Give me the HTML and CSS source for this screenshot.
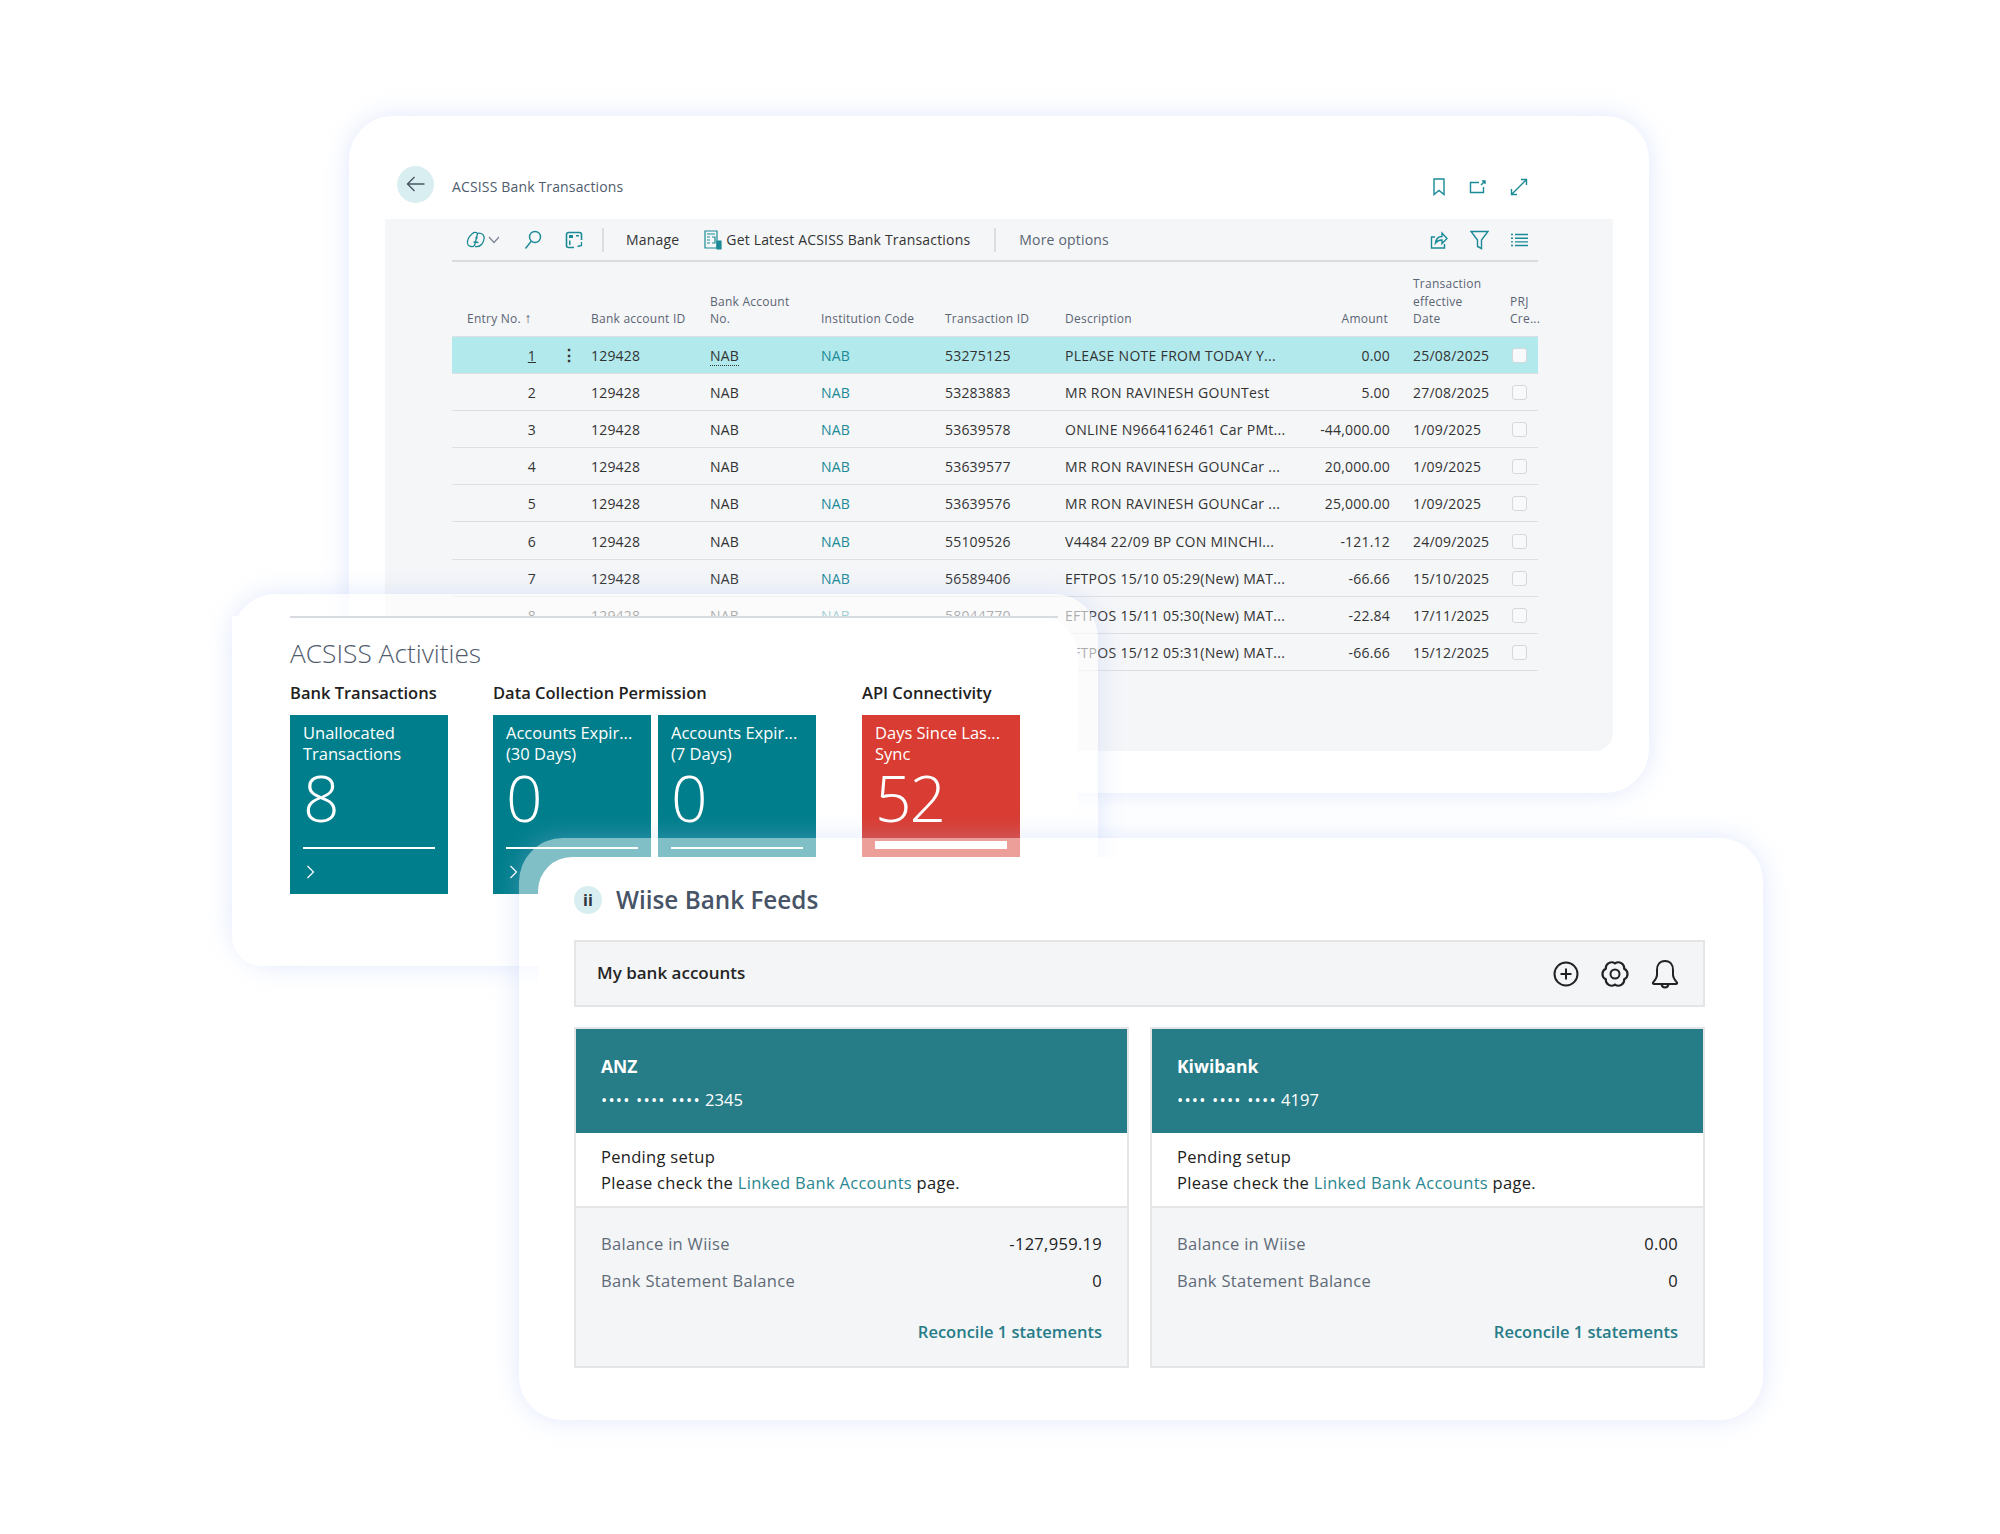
FILE: index.html

```html
<!DOCTYPE html>
<html lang="en">
<head>
  <meta charset="UTF-8">
  <title>Wiise Bank Feeds</title>
  <link rel="stylesheet" href="styles.css">
</head>
<body>
<div class="canvas">

  <!-- back window: bank transactions list -->
  <section class="window transactions">
    <div class="page-head">
      <span class="back-btn">
        <svg width="20" height="18" viewBox="0 0 20 18" fill="none" stroke="#4a5563" stroke-width="1.4"><path d="M18.5 9H1.5M8.5 2 1.5 9l7 7"/></svg>
      </span>
      <span class="page-title">ACSISS Bank Transactions</span>
      <span class="head-icons">
        <svg width="14" height="18" viewBox="0 0 14 18" fill="none" stroke="#1a8a96" stroke-width="1.4"><path d="M2 1h10v15.5l-5-4-5 4z"/></svg>
        <svg width="18" height="14" viewBox="0 0 18 14" fill="none" stroke="#1a8a96" stroke-width="1.4"><path d="M10 2.5H1.5v10h13V7M12 5l4-4M13 1h3v3"/></svg>
        <svg width="18" height="18" viewBox="0 0 18 18" fill="none" stroke="#1a8a96" stroke-width="1.4"><path d="M1.5 16.5l15-15M11 1.500h5.500V7M1.500 11v5.500H7"/></svg>
      </span>
    </div>

    <div class="panel">
      <div class="toolbar">
        <svg class="tool-icon" width="20" height="18" viewBox="0 0 20 18" fill="none" stroke="#1a8a96" stroke-width="1.3"><path d="M6.500 2.500c1.500-1.500 4-1.500 5 0L9 13c-.5 2-2 3-4 2.500-2.500-.5-4-2.500-3.500-5C2 7 4 4.500 6.500 2.500z"/><path d="M11.500 2.500c2-1 5.500 0 6.500 3 .5 2-.5 5-2 7.500-1.500 2-4 3-7 2.500M9.500 6.500l2 .5M7.500 11l5 .5"/></svg>
        <svg class="chevron" width="12" height="8" viewBox="0 0 12 8" fill="none" stroke="#7b8592" stroke-width="1.2"><path d="M1 1l5 5.500L11 1"/></svg>
        <svg class="tool-icon search" width="18" height="20" viewBox="0 0 18 20" fill="none" stroke="#1a8a96" stroke-width="1.4"><circle cx="11" cy="7" r="5.500"/><path d="M7 11.500 1.500 18.500"/></svg>
        <svg class="tool-icon layout" width="18" height="18" viewBox="0 0 18 18" fill="none" stroke="#1a8a96" stroke-width="1.6"><path d="M9 16.500H3.500a2 2 0 0 1-2-2v-11a2 2 0 0 1 2-2h11a2 2 0 0 1 2 2V9"/><path d="M4 4h4v3H4zM11 4h3v1.500h-3zM4 9.500h1.500V14H4z" fill="#1a8a96" stroke="none"/><path d="M16.500 11v3.500l-4 1" stroke-width="1.300"/></svg>
        <span class="tool-sep first"></span>
        <span class="tool-text manage">Manage</span>
        <svg class="report" width="18" height="20" viewBox="0 0 18 20" fill="none" stroke="#1a8a96" stroke-width="1.200"><path d="M1 1h12v17H1zM3 4h8M3 7h3M3 10h3M3 13h3M8 7h3v6H8"/><path d="M13 11h4v8h-4z" fill="#1a8a96"/></svg>
        <span class="tool-text">Get Latest ACSISS Bank Transactions</span>
        <span class="tool-sep"></span>
        <span class="tool-text muted">More options</span>
        <span class="tool-right">
          <svg width="18" height="18" viewBox="0 0 18 18" fill="none" stroke="#1a8a96" stroke-width="1.4"><path d="M5 6H1.500v11h13v-4M5.500 12c.5-4 3-6.500 6.500-6.500V2l5 5.500-5 5V9c-3 0-5 1-6.500 3z"/></svg>
          <svg width="19" height="20" viewBox="0 0 19 20" fill="none" stroke="#1a8a96" stroke-width="1.400"><path d="M1 1.500h17L11.500 10v8.500l-4-2V10z"/></svg>
          <svg width="17" height="14" viewBox="0 0 17 14" fill="none" stroke="#1a8a96" stroke-width="1.400"><path d="M0 1.500h2M4 1.500h13M0 5.200h2M4 5.200h13M0 8.900h2M4 8.900h13M0 12.500h2M4 12.500h13"/></svg>
        </span>
      </div>

      <table class="grid">
        <colgroup>
          <col class="c-entry"><col class="c-menu"><col class="c-id"><col class="c-no"><col class="c-inst"><col class="c-trans"><col class="c-desc"><col class="c-amt"><col class="c-date"><col class="c-prj">
        </colgroup>
        <thead>
          <tr>
            <th class="th-entry" colspan="2">Entry No. <span class="arrow">↑</span></th>
            <th class="th-id">Bank account ID</th>
            <th>Bank Account<br>No.</th>
            <th>Institution Code</th>
            <th>Transaction ID</th>
            <th>Description</th>
            <th class="num">Amount</th>
            <th>Transaction<br>effective<br>Date</th>
            <th>PRJ<br>Cre...</th>
          </tr>
        </thead>
        <tbody>
          <tr class="active">
            <td class="num entry"><u>1</u></td><td class="dots">⋮</td><td>129428</td><td><span class="dotted">NAB</span></td><td class="link">NAB</td><td>53275125</td><td class="desc">PLEASE NOTE FROM TODAY Y...</td><td class="num amt">0.00</td><td>25/08/2025</td><td><span class="check"></span></td>
          </tr>
          <tr>
            <td class="num entry">2</td><td></td><td>129428</td><td>NAB</td><td class="link">NAB</td><td>53283883</td><td class="desc">MR RON RAVINESH GOUNTest</td><td class="num amt">5.00</td><td>27/08/2025</td><td><span class="check"></span></td>
          </tr>
          <tr>
            <td class="num entry">3</td><td></td><td>129428</td><td>NAB</td><td class="link">NAB</td><td>53639578</td><td class="desc">ONLINE N9664162461 Car PMt...</td><td class="num amt">-44,000.00</td><td>1/09/2025</td><td><span class="check"></span></td>
          </tr>
          <tr>
            <td class="num entry">4</td><td></td><td>129428</td><td>NAB</td><td class="link">NAB</td><td>53639577</td><td class="desc">MR RON RAVINESH GOUNCar ...</td><td class="num amt">20,000.00</td><td>1/09/2025</td><td><span class="check"></span></td>
          </tr>
          <tr>
            <td class="num entry">5</td><td></td><td>129428</td><td>NAB</td><td class="link">NAB</td><td>53639576</td><td class="desc">MR RON RAVINESH GOUNCar ...</td><td class="num amt">25,000.00</td><td>1/09/2025</td><td><span class="check"></span></td>
          </tr>
          <tr>
            <td class="num entry">6</td><td></td><td>129428</td><td>NAB</td><td class="link">NAB</td><td>55109526</td><td class="desc">V4484 22/09 BP CON MINCHI...</td><td class="num amt">-121.12</td><td>24/09/2025</td><td><span class="check"></span></td>
          </tr>
          <tr>
            <td class="num entry">7</td><td></td><td>129428</td><td>NAB</td><td class="link">NAB</td><td>56589406</td><td class="desc">EFTPOS 15/10 05:29(New) MAT...</td><td class="num amt">-66.66</td><td>15/10/2025</td><td><span class="check"></span></td>
          </tr>
          <tr>
            <td class="num entry">8</td><td></td><td>129428</td><td>NAB</td><td class="link">NAB</td><td>58044770</td><td class="desc">EFTPOS 15/11 05:30(New) MAT...</td><td class="num amt">-22.84</td><td>17/11/2025</td><td><span class="check"></span></td>
          </tr>
          <tr>
            <td class="num entry">9</td><td></td><td>129428</td><td>NAB</td><td class="link">NAB</td><td>59044771</td><td class="desc">EFTPOS 15/12 05:31(New) MAT...</td><td class="num amt">-66.66</td><td>15/12/2025</td><td><span class="check"></span></td>
          </tr>
        </tbody>
      </table>
    </div>
  </section>

  <!-- middle window: activity tiles -->
  <section class="window activities">
    <div class="activities-body">
      <h2 class="activities-title">ACSISS Activities</h2>
      <div class="tile-groups">
        <div class="tile-group">
          <h3>Bank Transactions</h3>
          <div class="tiles">
            <div class="tile">
              <div class="tile-label">Unallocated<br>Transactions</div>
              <div class="tile-value">8</div>
              <div class="tile-line"></div>
              <svg class="tile-chevron" width="9" height="14" viewBox="0 0 9 14" fill="none" stroke="#fff" stroke-width="1.200"><path d="M1.500 1l6 6-6 6"/></svg>
            </div>
          </div>
        </div>
        <div class="tile-group">
          <h3>Data Collection Permission</h3>
          <div class="tiles">
            <div class="tile">
              <div class="tile-label">Accounts Expir...<br>(30 Days)</div>
              <div class="tile-value">0</div>
              <div class="tile-line"></div>
              <svg class="tile-chevron" width="9" height="14" viewBox="0 0 9 14" fill="none" stroke="#fff" stroke-width="1.200"><path d="M1.500 1l6 6-6 6"/></svg>
            </div>
            <div class="tile">
              <div class="tile-label">Accounts Expir...<br>(7 Days)</div>
              <div class="tile-value">0</div>
              <div class="tile-line"></div>
            </div>
          </div>
        </div>
        <div class="tile-group">
          <h3>API Connectivity</h3>
          <div class="tiles">
            <div class="tile red">
              <div class="tile-label">Days Since Las...<br>Sync</div>
              <div class="tile-value">52</div>
              <div class="tile-line"></div>
            </div>
          </div>
        </div>
      </div>
    </div>
  </section>

  <!-- front window: bank feeds -->
  <section class="window feeds">
    <div class="feeds-body">
      <div class="feeds-head">
        <span class="feeds-logo">ii</span>
        <h1>Wiise Bank Feeds</h1>
      </div>
      <div class="accounts-bar">
        <span class="bar-title">My bank accounts</span>
        <span class="bar-icons">
          <svg width="26" height="26" viewBox="0 0 26 26" fill="none" stroke="#222" stroke-width="2"><circle cx="13" cy="13" r="11.500"/><path d="M13 7.500v11M7.500 13h11"/></svg>
          <svg width="28" height="26" viewBox="0 0 28 26" fill="none" stroke="#222" stroke-width="2"><circle cx="14" cy="13" r="4.500"/><path d="M14 3.200A5.400 5.400 0 0 1 22.490 8.100 5.400 5.400 0 0 1 22.490 17.900 5.400 5.400 0 0 1 14 22.800 5.400 5.400 0 0 1 5.510 17.900 5.400 5.400 0 0 1 5.510 8.100 5.400 5.400 0 0 1 14 3.200z" transform="translate(14 13) scale(1.080) translate(-14 -13)"/></svg>
          <svg width="28" height="30" viewBox="0 0 28 30" fill="none" stroke="#222" stroke-width="2" stroke-linejoin="round"><path d="M14 2C8.500 2 6 6 6 11v5c0 3-2 5-4 7.500-.4.700 0 1.500 1 1.500h22c1 0 1.400-.8 1-1.500-2-2.500-4-4.500-4-7.500v-5c0-5-2.500-9-8-9z"/><path d="M10.500 25c.3 2 1.600 3.500 3.500 3.500s3.200-1.500 3.500-3.500"/></svg>
        </span>
      </div>
      <div class="bank-cards">
        <div class="bank-card">
          <div class="bank-head">
            <div class="bank-name">ANZ</div>
            <div class="bank-number"><span class="mask">•••• •••• ••••</span> 2345</div>
          </div>
          <div class="bank-note">
            Pending setup<br>
            Please check the <a href="#">Linked Bank Accounts</a> page.
          </div>
          <div class="bank-foot">
            <div class="bal-row"><span>Balance in Wiise</span><b>-127,959.19</b></div>
            <div class="bal-row"><span>Bank Statement Balance</span><b>0</b></div>
            <a class="reconcile" href="#">Reconcile 1 statements</a>
          </div>
        </div>
        <div class="bank-card">
          <div class="bank-head">
            <div class="bank-name">Kiwibank</div>
            <div class="bank-number"><span class="mask">•••• •••• ••••</span> 4197</div>
          </div>
          <div class="bank-note">
            Pending setup<br>
            Please check the <a href="#">Linked Bank Accounts</a> page.
          </div>
          <div class="bank-foot">
            <div class="bal-row"><span>Balance in Wiise</span><b>0.00</b></div>
            <div class="bal-row"><span>Bank Statement Balance</span><b>0</b></div>
            <a class="reconcile" href="#">Reconcile 1 statements</a>
          </div>
        </div>
      </div>
    </div>
  </section>

</div>
</body>
</html>
```

FILE: styles.css

```css
* { box-sizing: border-box; }

body {
  margin: 0;
  background: #fff;
  font-family: "Open Sans", "Noto Sans", sans-serif;
  color: #333;
}
h1, h2, h3 { margin: 0; font-weight: 400; }
a { text-decoration: none; }

.canvas {
  position: relative;
  width: 2000px;
  height: 1534px;
  overflow: hidden;
}

.window {
  position: absolute;
  border-radius: 44px;
  box-shadow: 0 0 26px rgba(170, 190, 245, 0.35);
}

/* back window */
.transactions {
  left: 349px;
  top: 116px;
  width: 1300px;
  height: 677px;
  padding: 0 36px;
  background: #fff;
}
.page-head {
  display: flex;
  align-items: center;
  height: 103px;
  padding: 33px 0 0 12px;
}
.back-btn {
  display: flex;
  align-items: center;
  justify-content: center;
  width: 37px;
  height: 37px;
  border-radius: 50%;
  background: #d9eef0;
}
.page-title {
  margin-left: 18px;
  padding-top: 4px;
  font-size: 14px;
  letter-spacing: 0.15px;
  color: #505c6d;
}
.head-icons {
  display: flex;
  align-items: center;
  gap: 23px;
  margin-left: auto;
  margin-right: 85px;
  padding-top: 5px;
}
.panel {
  height: 532px;
  padding: 0 75px 0 67px;
  background: #f5f6f8;
  border-radius: 0 0 18px 0;
}
.toolbar {
  display: flex;
  align-items: center;
  height: 43px;
  padding-left: 14px;
  border-bottom: 2px solid #d9dbdf;
  font-size: 14px;
  letter-spacing: 0.18px;
  color: #333;
}
.chevron { margin-left: 2px; }
.search { margin-left: 24px; }
.layout { margin-left: 23px; }
.tool-sep {
  width: 2px;
  height: 24px;
  margin-left: 24px;
  background: #dcdee2;
}
.tool-sep.first { margin-left: 19px; }
.manage { margin: 0 25px 0 22px; }
.report { margin-right: 4px; }
.muted { margin-left: 23px; color: #5a6473; }
.tool-right {
  display: flex;
  align-items: center;
  gap: 22px;
  margin-left: auto;
  margin-right: 10px;
}

.grid {
  width: 1086px;
  table-layout: fixed;
  border-collapse: collapse;
  font-size: 14px;
  letter-spacing: 0.2px;
  color: #333;
}
.c-entry { width: 96px; }
.c-menu { width: 36px; }
.c-id { width: 119px; }
.c-no { width: 111px; }
.c-inst { width: 124px; }
.c-trans { width: 120px; }
.c-desc { width: 242px; }
.c-amt { width: 106px; }
.c-date { width: 97px; }
.c-prj { width: 35px; }

.grid th {
  height: 74px;
  padding: 0 0 8px 7px;
  vertical-align: bottom;
  text-align: left;
  font-size: 12px;
  font-weight: 400;
  letter-spacing: 0.25px;
  line-height: 17.500px;
  color: #5a6473;
  white-space: nowrap;
}
.grid th.th-entry { padding-left: 15px; }
.arrow { font-size: 14px; line-height: 12px; }
.grid th.num { padding-right: 18px; text-align: right; }
.grid td {
  height: 37.200px;
  padding: 1px 0 0 7px;
  border-bottom: 1px solid #dddfe3;
  white-space: nowrap;
}
.grid thead tr { border-bottom: 1px solid #dddfe3; }
.grid td.num { padding: 1px 0 0; text-align: right; }
.grid td.entry { padding-right: 12px; }
.grid td.amt { padding-right: 16px; }
.grid td.dots { font-size: 16px; font-weight: 700; padding: 0 0 0 13px; color: #333; }
.grid td.link { color: #1a8a96; }
.grid td.desc { letter-spacing: 0.3px; }
.active td { background: #b2e9ec; }
.dotted { border-bottom: 1px dotted #333; }
.check {
  display: block;
  width: 15px;
  height: 15px;
  margin-left: 2px;
  border: 1px solid #d4d7dc;
  border-radius: 3px;
  background: #f8f9fa;
}

/* middle window */
.activities {
  left: 232px;
  top: 594px;
  width: 866px;
  height: 372px;
  padding: 22px 20px 0 0;
  background: rgba(255, 255, 255, 0.6);
}
.activities-body {
  height: 350px;
  padding: 0 0 0 58px;
  background: #fff;
  border-radius: 0 40px 26px 30px;
}
.activities-title {
  width: 768px;
  padding-top: 19px;
  border-top: 2px solid #d8dbe0;
  font-size: 26.300px;
  font-weight: 300;
  line-height: 32px;
  color: #505c6d;
}
.tile-groups {
  display: flex;
  gap: 45px;
  margin-top: 13px;
}
.tile-group h3 {
  margin-bottom: 11px;
  font-size: 16.500px;
  font-weight: 600;
  line-height: 22px;
  color: #212121;
}
.tile-group:nth-child(2) { width: 324px; }
.tiles {
  display: flex;
  gap: 7px;
}
.tile {
  position: relative;
  width: 158px;
  height: 179px;
  padding: 8px 13px 0;
  background: #017e8b;
  color: #fff;
}
.tile-label {
  font-size: 16.500px;
  line-height: 20.500px;
  white-space: nowrap;
}
.tile-value {
  margin-top: -3px;
  font-size: 64px;
  font-weight: 300;
  line-height: 74px;
  letter-spacing: -2px;
}
.tile-line {
  height: 2px;
  margin-top: 12px;
  background: #fff;
}
.tile-chevron {
  display: block;
  margin: 16px 0 0 3px;
}
.tile.red { background: #d93c32; }
.tile.red .tile-line {
  height: 8px;
  margin-top: 6px;
}

/* front window */
.feeds {
  left: 519px;
  top: 838px;
  width: 1244px;
  height: 582px;
  padding: 19px 0 0 19px;
  background: rgba(255, 255, 255, 0.5);
}
.feeds-body {
  height: 563px;
  padding: 0 58px 0 36px;
  background: #fff;
  border-radius: 34px 44px 44px 26px;
}
.feeds-head {
  display: flex;
  align-items: center;
  height: 83px;
  padding-top: 2px;
  gap: 14px;
}
.feeds-logo {
  display: flex;
  align-items: center;
  justify-content: center;
  width: 28px;
  height: 28px;
  border-radius: 50%;
  background: #d9eef0;
  font-size: 16px;
  font-weight: 700;
  color: #2e3440;
}
.feeds-head h1 {
  font-size: 24.300px;
  font-weight: 600;
  color: #475467;
}
.accounts-bar {
  display: flex;
  align-items: center;
  justify-content: space-between;
  width: 1131px;
  height: 67px;
  padding: 0 24px 0 21px;
  background: #f4f5f7;
  border: 2px solid #e5e5e5;
  font-size: 17px;
  font-weight: 600;
  color: #262626;
}
.bar-title { padding-bottom: 2px; }
.bar-icons {
  display: flex;
  align-items: center;
  gap: 22px;
}
.bank-cards {
  display: flex;
  gap: 21px;
  width: 1131px;
  margin-top: 20px;
}
.bank-card {
  flex: 1;
  height: 341px;
  border: 2px solid #e5e5e5;
  background: #fff;
  font-size: 16.500px;
  letter-spacing: 0.3px;
}
.bank-head {
  height: 104px;
  padding: 25px 25px 0;
  background: #267c87;
  color: #fff;
}
.bank-name {
  font-size: 17.500px;
  font-weight: 700;
  letter-spacing: 0;
  line-height: 24px;
}
.bank-number {
  margin-top: 11px;
  font-size: 16.500px;
  letter-spacing: 0;
  line-height: 22px;
}
.mask { letter-spacing: 1.200px; }
.bank-note {
  height: 73px;
  padding: 11px 25px 0;
  line-height: 25.500px;
  color: #212121;
}
.bank-note a { color: #2a8791; }
.bank-foot {
  height: 160px;
  padding: 18px 25px 0;
  background: #f4f5f7;
  border-top: 2px solid #e5e5e5;
}
.bal-row {
  display: flex;
  justify-content: space-between;
  height: 36.500px;
  line-height: 36px;
  color: #5f6b78;
}
.bal-row b {
  font-weight: 400;
  color: #212121;
}
.reconcile {
  display: block;
  margin-top: 21px;
  text-align: right;
  font-weight: 600;
  letter-spacing: 0;
  color: #267c87;
}
```
